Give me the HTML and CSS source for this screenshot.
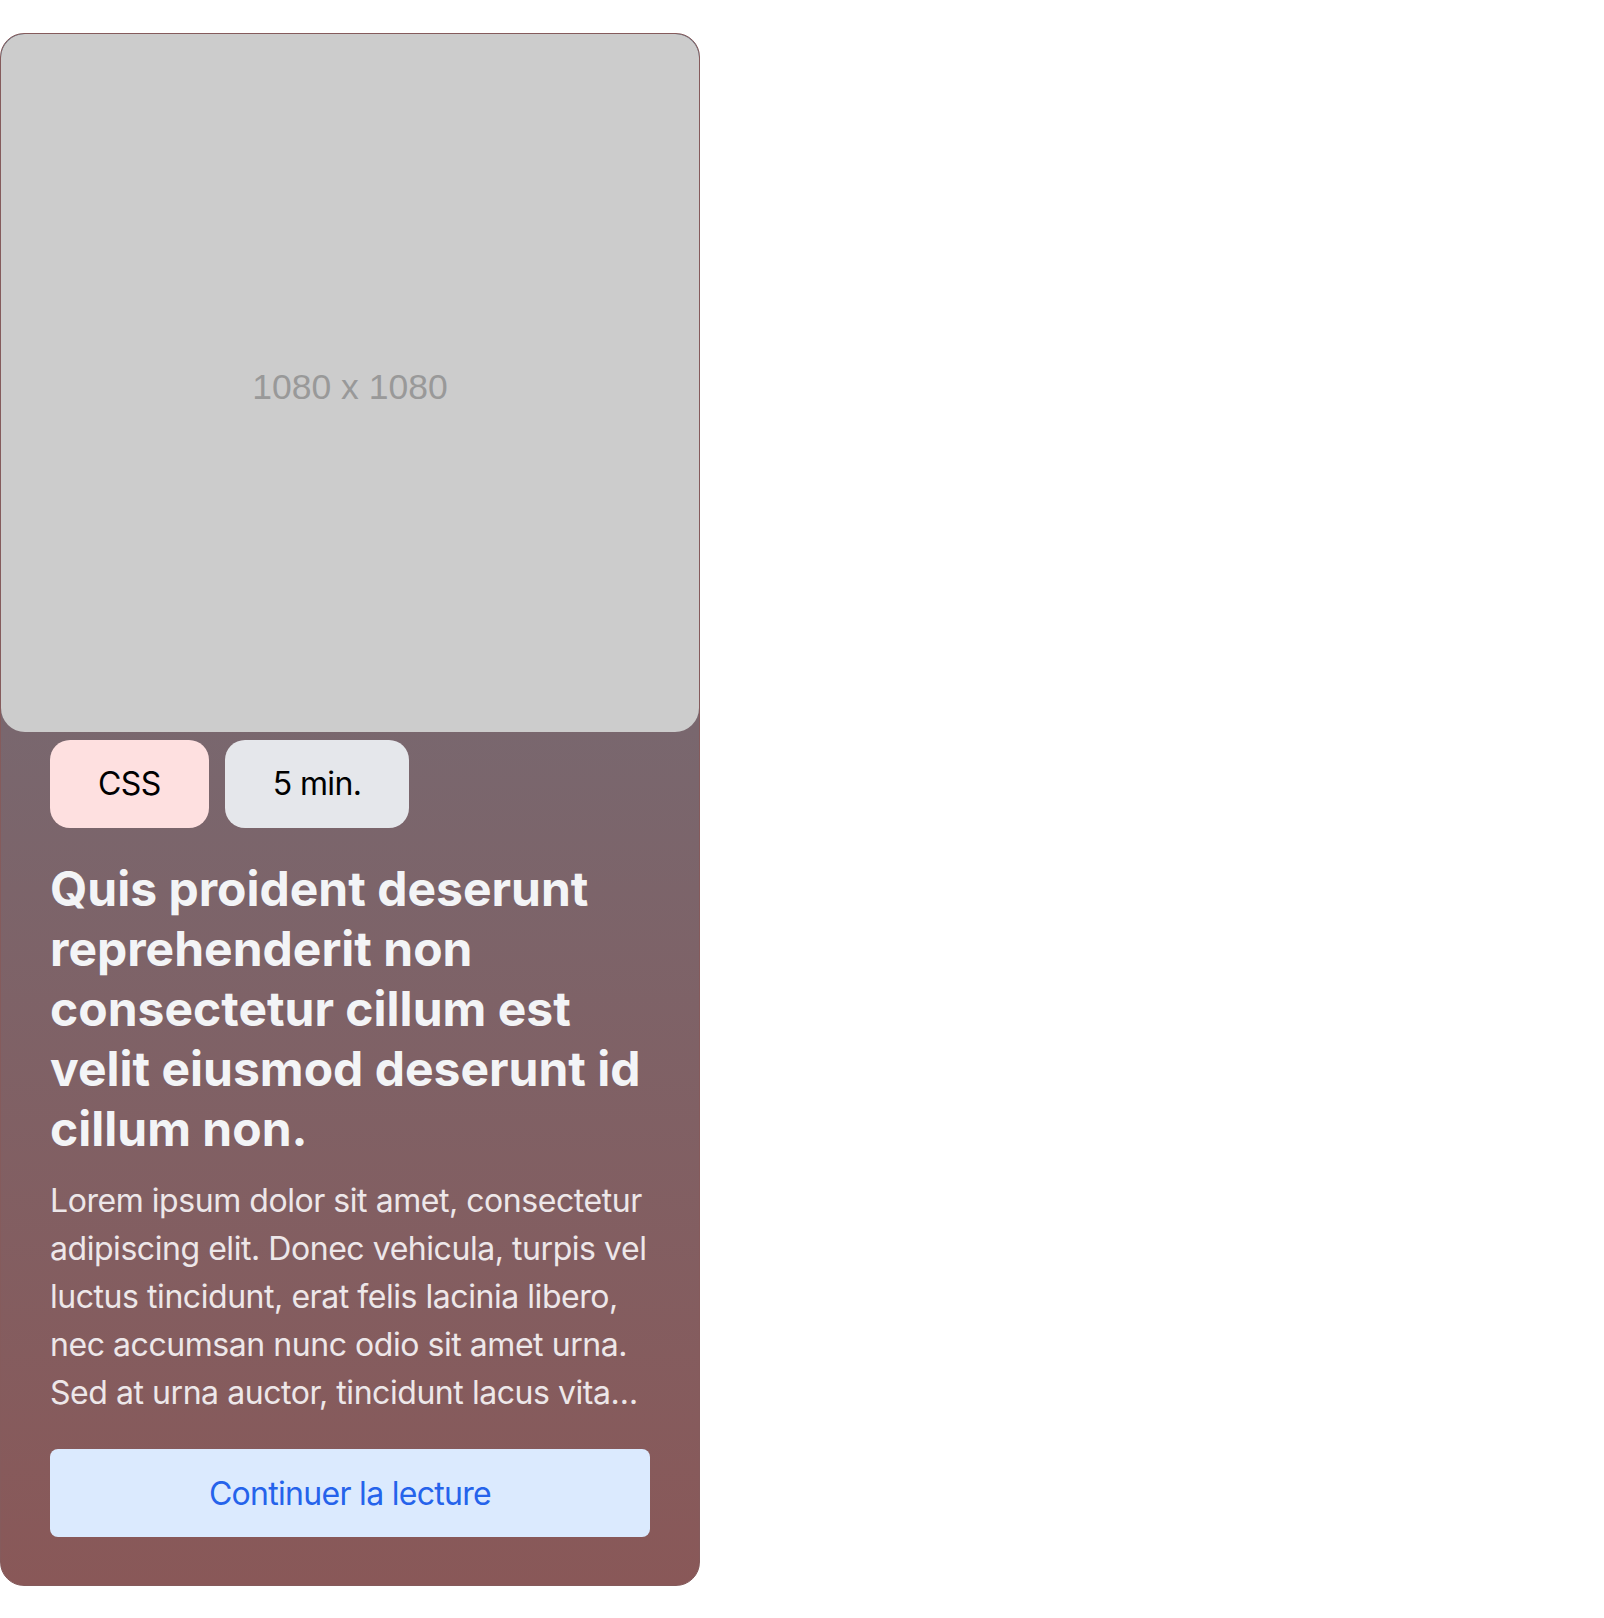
FILE: index.html
```html
<!DOCTYPE html>
<html lang="fr">
<head>
<meta charset="utf-8">
<title>Carte article</title>
<link rel="stylesheet" href="styles.css">
</head>
<body>
<article class="card">
  <div class="cover"><span class="cover-label">1080 x 1080</span></div>
  <div class="content">
    <div class="tags">
      <span class="tag tag-red">CSS</span>
      <span class="tag tag-gray">5 min.</span>
    </div>
    <h2 class="title">Quis proident deserunt reprehenderit non consectetur cillum est velit eiusmod deserunt id cillum non.</h2>
    <p class="excerpt">Lorem ipsum dolor sit amet, consectetur adipiscing elit. Donec vehicula, turpis vel luctus tincidunt, erat felis lacinia libero, nec accumsan nunc odio sit amet urna. Sed at urna auctor, tincidunt lacus vitae, fermentum nunc. Integer sed magna nec nisl feugiat posuere.</p>
    <a class="button" href="#">Continuer la lecture</a>
  </div>
</article>
</body>
</html>
```

FILE: styles.css
```css
* { box-sizing: border-box; }
html, body { margin: 0; padding: 0; background: #ffffff; }
body {
  padding-top: 33px;
  font-family: Inter, "Noto Sans", sans-serif;
}
.card {
  width: 700px;
  border: 1px solid #855b5c;
  border-radius: 24px;
  overflow: hidden;
  background: linear-gradient(to bottom, #6c7380 0%, #895858 100%);
}
.cover {
  height: 698px;
  background: #cccccc;
  border-radius: 24px;
  display: flex;
  align-items: center;
  justify-content: center;
}
.cover-label {
  font-family: "Liberation Sans", Arial, sans-serif;
  font-size: 35.5px;
  color: #999999;
  margin-top: 8px;
}
.content {
  padding: 8px 49px 48px;
  display: flex;
  flex-direction: column;
}
.tags {
  display: flex;
  gap: 16px;
}
.tag {
  font-size: 32px;
  line-height: 48px;
  padding: 20px 48px;
  border-radius: 20px;
  color: #000000;
  letter-spacing: -0.6px;
}
.tag-red { background: #fee0e0; }
.tag-gray { background: #e5e7eb; }
.title {
  margin: 31px 0 0;
  font-size: 48px;
  line-height: 60px;
  font-weight: 700;
  color: #f3f4f6;
}
.excerpt {
  margin: 18px 0 0;
  font-size: 32px;
  line-height: 48px;
  letter-spacing: -0.45px;
  color: #ede7e9;
  display: -webkit-box;
  -webkit-line-clamp: 5;
  -webkit-box-orient: vertical;
  overflow: hidden;
}
.button {
  margin-top: 32px;
  height: 88px;
  display: flex;
  align-items: center;
  justify-content: center;
  background: #dbeafe;
  color: #2563eb;
  font-size: 32px;
  letter-spacing: -0.7px;
  border-radius: 8px;
  text-decoration: none;
}
```
